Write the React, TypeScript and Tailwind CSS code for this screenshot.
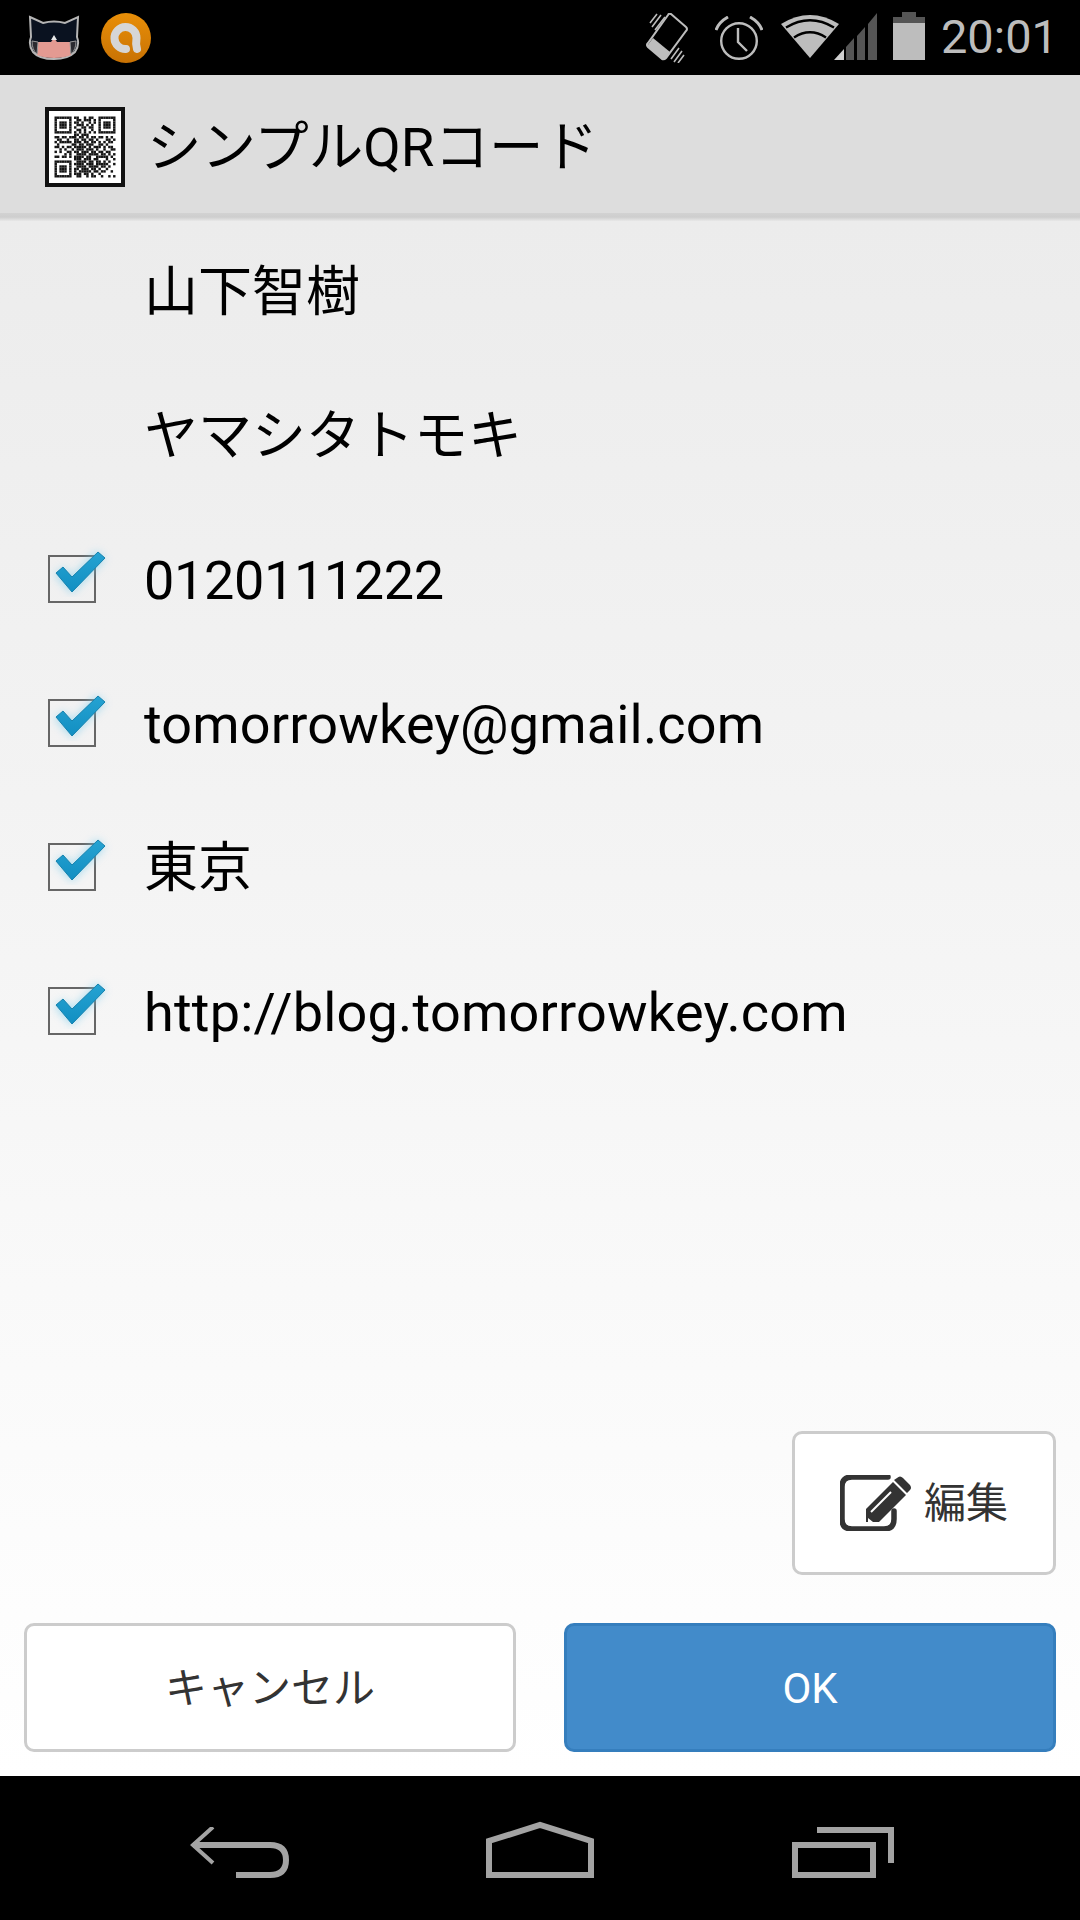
import React from "react";

const jp = "font-['Roboto','Noto_Sans_CJK_JP',sans-serif]";

function Cat() {
  return (
    <svg width="52" height="46" viewBox="0 0 52 46">
      <path d="M2 2 L15 8 Q26 5 37 8 L50 2 L49 22 Q52 30 47 37 Q40 44 26 44 Q11 44 5 37 Q0 30 3 22 Z" fill="#0a1220" stroke="#b5b5b5" strokeWidth="2" />
      <path d="M10 27 L23 27 L26 23 L29 27 L42 27 L43 40 Q36 43 26 43 Q16 43 9 40 Z" fill="#e39a92" />
      <path d="M26 20 L23 25 L29 25 Z" fill="#e8e8e8" />
      <path d="M4 26 L10 27 L9 39 Q4 35 4 26 Z M48 26 L42 27 L43 39 Q48 35 48 26 Z" fill="#2a2a30" stroke="#999" strokeWidth="1" />
    </svg>
  );
}

function Orange() {
  return (
    <svg width="50" height="50" viewBox="0 0 50 50">
      <defs>
        <linearGradient id="og" x1="0" y1="0" x2="0" y2="1">
          <stop offset="0" stopColor="#e98f08" />
          <stop offset="1" stopColor="#c87204" />
        </linearGradient>
      </defs>
      <circle cx="25" cy="25" r="25" fill="url(#og)" />
      <path d="M36 36 Q34.5 31 35.5 25 A11 11 0 1 0 25 36" fill="none" stroke="#d6d6d6" strokeWidth="8" strokeLinecap="round" />
    </svg>
  );
}

function Vibrate() {
  return (
    <svg width="44" height="50" viewBox="0 0 44 50" fill="none" stroke="#bdbdbd">
      <path d="M26 1 L41 14 Q43 16 41 18 L21 45 Q19 47 17 46 L3 34 Q1 32 3 30 L23 2 Q24 0 26 1 Z" strokeWidth="2" />
      <path d="M2 33 L17 46 Q19 47 21 45 L25 39 L8 25 Z" fill="#bdbdbd" stroke="none" />
      <path d="M7 14 L16 2 M10 17 L20 4 M5 10 L12 1" strokeWidth="1.6" />
      <path d="M26 46 L34 35 M29 49 L37 38 M33 50 L39 42" strokeWidth="1.6" />
    </svg>
  );
}

function Alarm() {
  return (
    <svg width="48" height="44" viewBox="0 0 48 44" fill="none" stroke="#bdbdbd" strokeWidth="2.4">
      <circle cx="24" cy="25" r="17.8" />
      <path d="M23 12 V26 L32 35" />
      <path d="M1 14 Q4 6 13 1" strokeWidth="3" />
      <path d="M47 14 Q44 6 35 1" strokeWidth="3" />
    </svg>
  );
}

function Wifi() {
  return (
    <svg width="97" height="49" viewBox="0 0 97 49">
      <path d="M0 12 Q29 -6 58 12 L29 46 Z" fill="#bdbdbd" />
      <path d="M5 15.5 Q29 1 53 15.5 M13 25.5 Q29 15 45 25.5" fill="none" stroke="#000" strokeWidth="2.4" />
      <path d="M53 48 L63 37 V48 Z" fill="#d0d0d0" />
      <path d="M65 48 V35 L73 26 V48 Z" fill="#555" />
      <path d="M76 48 V24 L84 15 V48 Z" fill="#555" />
      <path d="M87 48 V12 L96 1 V48 Z" fill="#555" />
    </svg>
  );
}

function Battery() {
  return (
    <svg width="32" height="48" viewBox="0 0 32 48">
      <rect x="9" y="0" width="14" height="6" fill="#555" />
      <rect x="0" y="5" width="32" height="6" fill="#555" />
      <rect x="0" y="11" width="32" height="37" fill="#bdbdbd" />
    </svg>
  );
}

const qrRows = [
  "1111111011001011001111111",
  "1000001001101110101000001",
  "1011101011010010101011101",
  "1011101001110101001011101",
  "1011101010011011001011101",
  "1000001001101001001000001",
  "1111111010101010101111111",
  "0000000011011100000000000",
  "1101101110110101101101010",
  "0110010011011011010001101",
  "1011111011101101101010110",
  "0100000110110111001101000",
  "1101011011111010111010110",
  "0010100101110111010010011",
  "1010011011011101101101100",
  "0000101001111011110110101",
  "1101101011110110011111010",
  "0000000011101110110001001",
  "1111111001111011011010100",
  "1000001011110111011111001",
  "1011101001111011110110100",
  "1011101011011101101001000",
  "1011101010111110110110010",
  "1000001011101101001000000",
  "1111111001100101100100101",
];

function QR() {
  return (
    <svg className="blur-[0.4px]" width="80" height="80" viewBox="0 0 80 80">
      <rect width="80" height="80" fill="#111" />
      <rect x="4" y="4" width="72" height="72" fill="#fff" />
      {qrRows.map((row, y) =>
        row.split("").map((c, x) =>
          c === "1" ? <rect key={`${x}-${y}`} x={9.5 + x * 2.44} y={9.5 + y * 2.44} width="2.44" height="2.44" fill="#151515" /> : null
        )
      )}
    </svg>
  );
}

function Check() {
  return (
    <div className="relative w-[48px] h-[48px] border-2 border-[#666] shrink-0">
      <svg className="absolute left-[-2px] top-[-14px]" width="70" height="62" viewBox="0 -12 70 62">
        <defs>
          <filter id="gl" x="-40%" y="-40%" width="180%" height="180%">
            <feGaussianBlur stdDeviation="4" />
          </filter>
          <linearGradient id="cg" x1="0" y1="0" x2="0" y2="1">
            <stop offset="0" stopColor="#25a3d2" />
            <stop offset="1" stopColor="#128fc2" />
          </linearGradient>
        </defs>
        <path d="M11 16 L24 30 L53 0" fill="none" stroke="#7ccdec" strokeWidth="12" opacity="0.6" filter="url(#gl)" />
        <path d="M8 18 L15 12 L24 22 L50 -3 L57 3 L24 37 Z" fill="url(#cg)" stroke="#1682ae" strokeWidth="1" strokeLinejoin="round" />
      </svg>
    </div>
  );
}

function Row({ text, checked, track = "" }: { text: string; checked?: boolean; track?: string }) {
  return (
    <div className="h-[144px] flex items-center">
      <div className="w-[144px] pl-[48px] pb-[4px] shrink-0">{checked ? <Check /> : null}</div>
      <span className={`text-[54px] leading-none text-black ${track} ${jp}`}>{text}</span>
    </div>
  );
}

function EditIcon() {
  return (
    <svg width="72" height="56" viewBox="0 0 72 56">
      <path d="M48 2 H12 Q2 2 2 12 V44 Q2 54 12 54 H44 Q54 54 54 44 V36" fill="none" stroke="#333" strokeWidth="5.5" strokeLinecap="round" />
      <path d="M26 34 L53 7 L66 20 L39 47 L26 47 Z" fill="#333" />
      <path d="M57 3 Q60 0 63 3 L70 10 Q72 13 70 15 L67 18 L54 5 Z" fill="#333" />
      <path d="M31 37 L51 17" stroke="#fff" strokeWidth="2" />
      <path d="M28 43 L33 47 H28 Z" fill="#fff" />
    </svg>
  );
}

export default function App() {
  return (
    <div className={`w-[1080px] h-[1920px] flex flex-col overflow-hidden ${jp}`}>
      <div className="h-[75px] bg-black flex items-center justify-between pl-[28px] pr-[22px] shrink-0">
        <div className="flex items-center gap-[21px]">
          <Cat />
          <Orange />
        </div>
        <div className="flex items-center">
          <Vibrate />
          <div className="ml-[26px]"><Alarm /></div>
          <div className="ml-[18px] mb-[3px]"><Wifi /></div>
          <div className="ml-[15px] mb-[3px]"><Battery /></div>
          <span className="ml-[16px] mb-[3px] text-[47px] leading-none text-[#bdbdbd] font-['Roboto'] font-normal">20:01</span>
        </div>
      </div>

      <div className="h-[138px] bg-[#dddddd] flex items-center pl-[45px] pt-[6px] shrink-0">
        <QR />
        <span className="ml-[22px] text-[54.5px] leading-none text-black">シンプルQRコード</span>
      </div>
      <div className="h-[8px] shrink-0 bg-gradient-to-b from-[#d2d2d2] via-[#cecece] to-[#e8e8e8]" />

      <div className="flex-1 flex flex-col bg-gradient-to-b from-[#ececec] to-[#ffffff] min-h-0">
        <div className="flex-1">
          <Row text="山下智樹" />
          <Row text="ヤマシタトモキ" />
          <Row text="0120111222" checked track="tracking-[-0.37px]" />
          <Row text="tomorrowkey@gmail.com" checked track="tracking-[0.17px]" />
          <Row text="東京" checked />
          <Row text="http://blog.tomorrowkey.com" checked track="tracking-[0.22px]" />
        </div>
        <div className="flex justify-end px-[24px]">
          <button className="w-[264px] h-[144px] rounded-[10px] border-[3px] border-[#cccccc] bg-white flex items-center justify-center gap-[12px] text-[42px] text-[#333333]">
            <EditIcon />
            <span>編集</span>
          </button>
        </div>
        <div className="flex gap-[48px] px-[24px] pt-[48px] pb-[24px]">
          <button className="flex-1 h-[129px] pt-[2px] rounded-[10px] border-[3px] border-[#cccccc] bg-white text-[42px] text-[#333333]">キャンセル</button>
          <button className="flex-1 h-[129px] pt-[2px] rounded-[10px] border-[3px] border-[#357ebd] bg-[#428bca] text-[42px] text-white">OK</button>
        </div>
      </div>

      <div className="h-[144px] bg-black shrink-0 grid grid-cols-3 items-end justify-items-center px-[90px] pb-[42px]">
        <svg width="100" height="51" viewBox="0 0 100 51">
          <path d="M3 18 H80 Q96 18 96 33 Q96 48 80 48 H46" fill="none" stroke="#a3a3a3" strokeWidth="6" />
          <path d="M23 0 L3 18 L23 36" fill="none" stroke="#a3a3a3" strokeWidth="4" />
        </svg>
        <svg width="108" height="57" viewBox="0 0 108 57">
          <path d="M3 54 V20 L54 4 L105 20 V54 Z" fill="none" stroke="#a3a3a3" strokeWidth="6" />
        </svg>
        <svg className="ml-[6px]" width="102" height="51" viewBox="0 0 102 51">
          <path d="M25 3 H99 V36" fill="none" stroke="#a3a3a3" strokeWidth="6" />
          <rect x="3" y="18" width="78" height="30" fill="none" stroke="#a3a3a3" strokeWidth="6" />
        </svg>
      </div>
    </div>
  );
}
